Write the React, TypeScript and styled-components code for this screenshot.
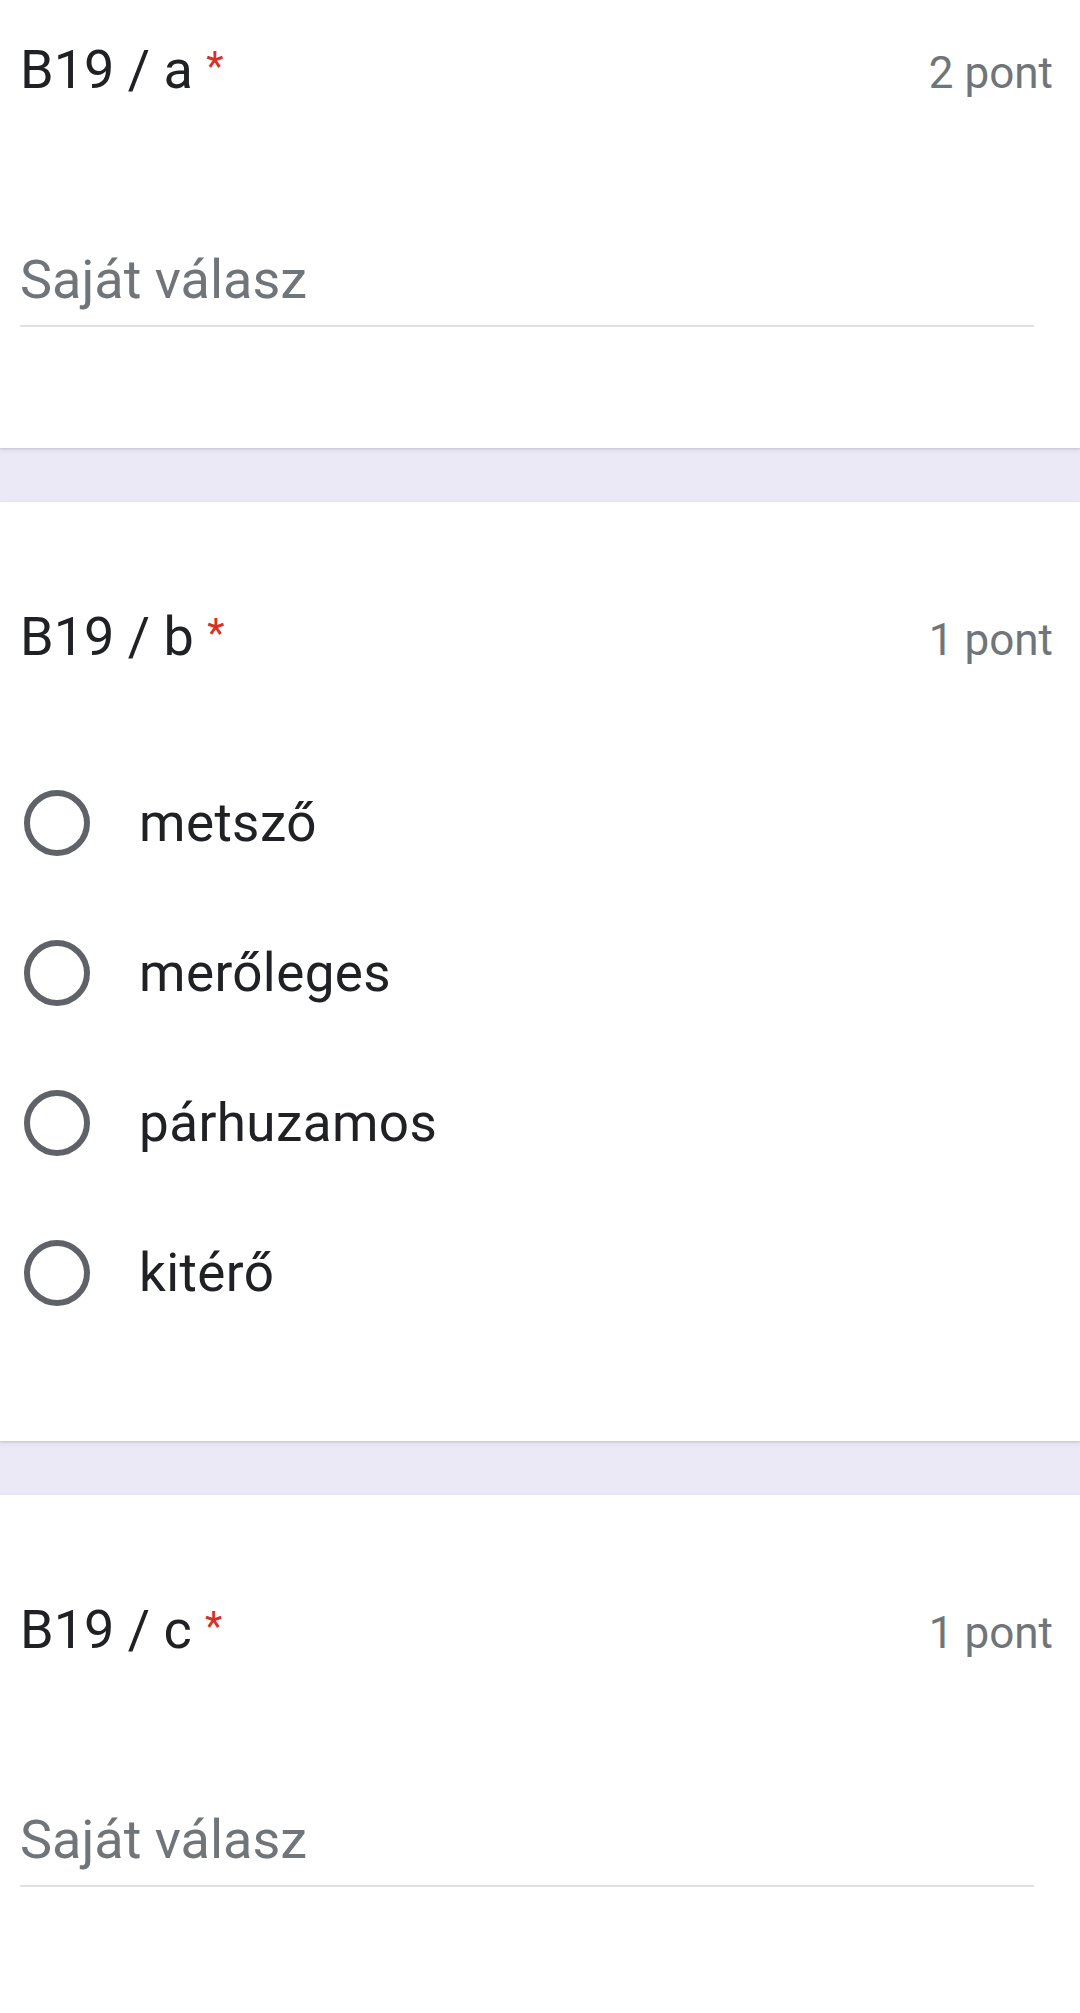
import { createGlobalStyle } from "styled-components";
import styled from "styled-components";

const GlobalStyle = createGlobalStyle`
  html, body {
    margin: 0;
    padding: 0;
    background: #ece9f7;
  }
  body {
    font-family: Roboto, "Liberation Sans", Arial, sans-serif;
    -webkit-font-smoothing: antialiased;
  }
`;

const Page = styled.main`
  width: 1080px;
  display: flex;
  flex-direction: column;
  gap: 54px;
`;

const Card = styled.section<{ $top: number; $bottom: number }>`
  background: #fff;
  padding: ${({ $top }) => $top}px 27px ${({ $bottom }) => $bottom}px 20px;
  box-shadow: 0 1px 2px rgba(60, 64, 67, 0.18), 0 2px 6px rgba(60, 64, 67, 0.08);
`;

const Header = styled.div`
  display: flex;
  justify-content: space-between;
  align-items: baseline;
`;

const Title = styled.h2`
  margin: 0;
  font-size: 54px;
  line-height: 64px;
  font-weight: 400;
  color: #202124;
`;

const Required = styled.span`
  color: #d93025;
  font-size: 40px;
  vertical-align: 8px;
`;

const Points = styled.span`
  font-size: 44px;
  line-height: 64px;
  color: #70757a;
`;

const Field = styled.div`
  margin: 143px 19px 0 0;
  padding-bottom: 13px;
  border-bottom: 2px solid #e0e0e0;
  font-size: 54px;
  line-height: 64px;
  color: #70757a;
`;

const Options = styled.div`
  display: flex;
  flex-direction: column;
  margin-top: 76px;
`;

const Option = styled.label`
  height: 150px;
  display: flex;
  align-items: center;
  gap: 49px;
  font-size: 53px;
  line-height: 64px;
  letter-spacing: 0.4px;
  color: #202124;
`;

const Radio = styled.span`
  width: 66px;
  height: 66px;
  margin-left: 4px;
  box-sizing: border-box;
  border: 6px solid #5f6368;
  border-radius: 50%;
  flex: none;
`;

type Question = {
  label: string;
  points: string;
  options?: string[];
};

const questions: Question[] = [
  { label: "B19 / a", points: "2 pont" },
  { label: "B19 / b", points: "1 pont", options: ["metsző", "merőleges", "párhuzamos", "kitérő"] },
  { label: "B19 / c", points: "1 pont" },
];

export default function App() {
  return (
    <>
      <GlobalStyle />
      <Page>
        {questions.map((q, i) => {
          const last = i === questions.length - 1;
          return (
            <Card
              key={q.label}
              $top={i === 0 ? 35 : 100}
              $bottom={q.options ? 93 : last ? 160 : 121}
            >
              <Header>
                <Title>
                  {q.label} <Required>*</Required>
                </Title>
                <Points>{q.points}</Points>
              </Header>
              {q.options ? (
                <Options>
                  {q.options.map((o) => (
                    <Option key={o}>
                      <Radio />
                      {o}
                    </Option>
                  ))}
                </Options>
              ) : (
                <Field>Saját válasz</Field>
              )}
            </Card>
          );
        })}
      </Page>
    </>
  );
}
